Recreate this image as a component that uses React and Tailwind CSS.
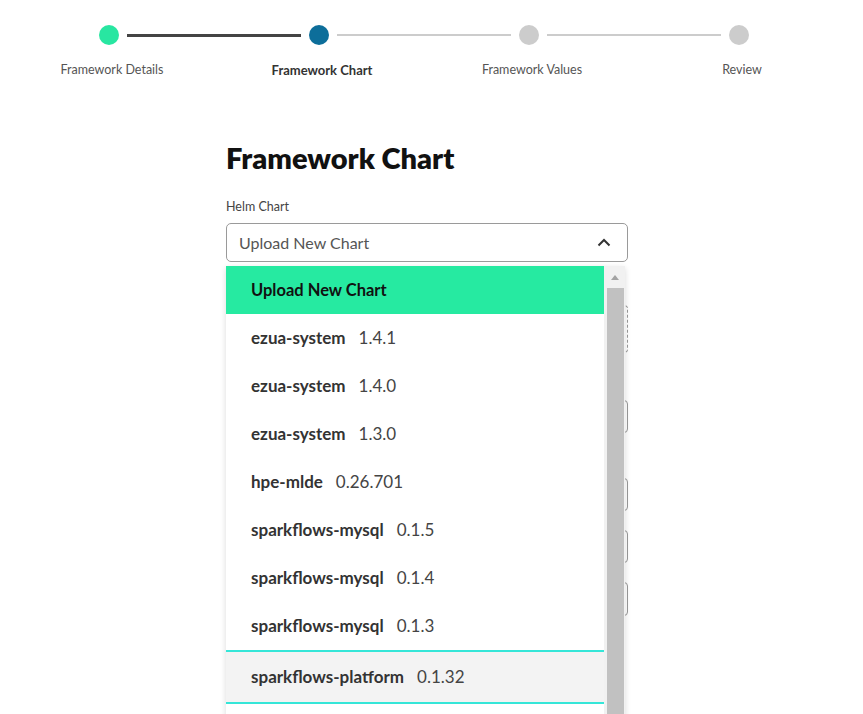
import React from "react";

const steps = [
  { label: "Framework Details", state: "done" },
  { label: "Framework Chart", state: "active" },
  { label: "Framework Values", state: "todo" },
  { label: "Review", state: "todo" },
];

const charts = [
  ["ezua-system", "1.4.1"],
  ["ezua-system", "1.4.0"],
  ["ezua-system", "1.3.0"],
  ["hpe-mlde", "0.26.701"],
  ["sparkflows-mysql", "0.1.5"],
  ["sparkflows-mysql", "0.1.4"],
  ["sparkflows-mysql", "0.1.3"],
  ["sparkflows-platform", "0.1.32"],
];

function Stepper() {
  return (
    <div className="pt-[25px]">
      <div className="flex items-center pl-[99px]">
        {steps.map((s, i) => (
          <React.Fragment key={s.label}>
            <div
              className={
                "w-5 h-5 rounded-full shrink-0 " +
                (s.state === "done" ? "bg-[#28e6a1]" : s.state === "active" ? "bg-[#0d6e9a]" : "bg-[#cccccc]")
              }
            />
            {i < steps.length - 1 && (
              <div
                className={
                  "mx-2 w-[174px] shrink-0 " + (i === 0 ? "h-[3px] bg-[#444444]" : "h-[2px] bg-[#cccccc]")
                }
              />
            )}
          </React.Fragment>
        ))}
      </div>
      <div className="flex pl-[7px] mt-[16px]">
        {steps.map((s) => (
          <div
            key={s.label}
            className={
              "w-[210px] text-center leading-[18px] " +
              (s.state === "active" ? "text-[13px] font-bold text-[#333333]" : "text-[12.5px] text-[#555555]")
            }
          >
            {s.label}
          </div>
        ))}
      </div>
    </div>
  );
}

function Dropdown() {
  return (
    <div className="absolute left-0 top-[43px] w-[399px] h-[460px] flex bg-white shadow-[0_2px_6px_rgba(0,0,0,0.15)]">
      <div className="w-[378px] flex flex-col">
        <div className="h-[48px] shrink-0 flex items-center pl-[25px] bg-[#26eaa1] text-[16.5px] font-bold text-[#111111]">
          Upload New Chart
        </div>
        {charts.map(([name, ver], i) => {
          const hl = i === charts.length - 1;
          return (
            <div
              key={name + ver}
              className={
                "shrink-0 flex items-center pl-[25px] gap-[13px] text-[17px] " +
                (hl ? "h-[54px] bg-[#f3f3f3] border-y-2 border-[#35e6d8]" : "h-[48px]")
              }
            >
              <span className="font-bold text-[#333333]">{name}</span>
              <span className="text-[#444444]">{ver}</span>
            </div>
          );
        })}
      </div>
      <div className="w-[21px] bg-[#f1f1f1] flex flex-col items-center">
        <div className="h-[22px] flex items-center">
          <div className="w-0 h-0 border-x-[4px] border-x-transparent border-b-[5px] border-b-[#a3a3a3]" />
        </div>
        <div className="w-[17px] ml-[2px] flex-1 bg-[#c1c1c1]" />
      </div>
    </div>
  );
}

export default function App() {
  return (
    <div className="w-full h-[714px] overflow-hidden bg-white font-['Lato','Noto_Sans',sans-serif]">
      <Stepper />
      <div className="w-[402px] ml-[226px] mt-[61px]">
        <h1 className="text-[29px] leading-[36px] font-extrabold text-[#111111]">Framework Chart</h1>
        <div className="mt-[23px] text-[12.5px] leading-[16px] text-[#444444]">Helm Chart</div>
        <div className="relative mt-[8px]">
          <div className="h-[39px] rounded-[5px] border border-[#9a9a9a] flex items-center justify-between pl-[12px] pr-[16px]">
            <span className="text-[16px] text-[#555555]">Upload New Chart</span>
            <svg width="14" height="9" viewBox="0 0 14 9" fill="none">
              <polyline points="1.5,7.5 7,2 12.5,7.5" stroke="#333" strokeWidth="2" />
            </svg>
          </div>
          <div className="mt-[43px] h-[48px] rounded-[4px] border border-dashed border-[#999999]" />
          <div className="mt-[47px] h-[33px] rounded-[4px] border border-[#999999]" />
          <div className="mt-[45px] h-[33px] rounded-[4px] border border-[#999999]" />
          <div className="mt-[19px] h-[33px] rounded-[4px] border border-[#999999]" />
          <div className="mt-[19px] h-[34px] rounded-[4px] border border-[#999999]" />
          <Dropdown />
        </div>
      </div>
    </div>
  );
}
